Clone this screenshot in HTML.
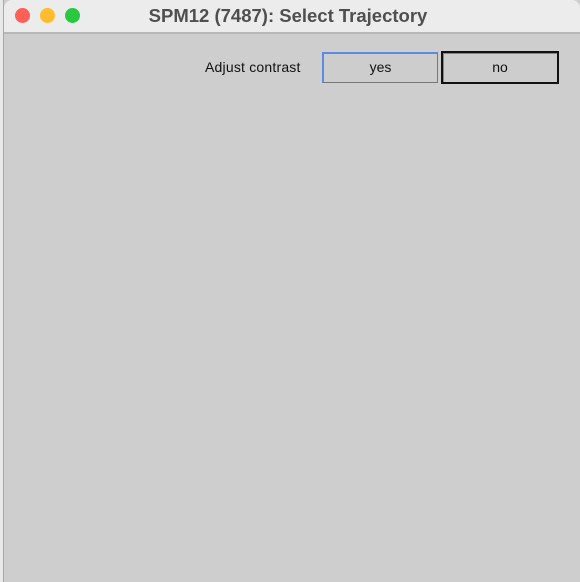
<!DOCTYPE html>
<html><head><style>
html,body{margin:0;padding:0;width:580px;height:582px;overflow:hidden;background:#cecece;font-family:"Liberation Sans",sans-serif;}
.strip{position:absolute;left:0;top:0;width:3px;height:582px;background:#e8e8e8;border-right:1px solid #aaa;}
.title{position:absolute;left:4px;top:0;width:576px;height:32px;background:#ececec;border-bottom:2px solid #b8b8b8;border-top-left-radius:8px;border-top-right-radius:8px;}
.title .t{position:absolute;left:0;right:0;top:5px;text-align:center;font-weight:bold;font-size:18.5px;color:#4f4f4f;padding-right:8px;}
.dot{position:absolute;top:8px;width:15px;height:15px;border-radius:50%;}
.lbl{position:absolute;left:205px;top:59px;font-size:14px;color:#111;letter-spacing:0.2px;}
.btn{position:absolute;box-sizing:border-box;background:#cdcdcd;font-size:14px;color:#111;text-align:center;line-height:27px;}
</style></head><body>
<div class="strip"></div>
<div class="title">
<div class="dot" style="left:11px;background:#fe5f57;"></div>
<div class="dot" style="left:36px;background:#febc2e;"></div>
<div class="dot" style="left:61px;background:#28c840;"></div>
<div class="t">SPM12 (7487): Select Trajectory</div>
</div>
<div class="lbl">Adjust contrast</div>
<div class="btn" style="left:322px;top:52px;width:116px;height:31px;border:1px solid #777;border-top:2px solid #5b8be0;border-left:2px solid #5b8be0;">yes</div>
<div class="btn" style="left:441px;top:51px;width:118px;height:33px;border:2px solid #111;box-shadow:inset 1px 1px 0 #5b8be0;line-height:29px;">no</div>
</body></html>
